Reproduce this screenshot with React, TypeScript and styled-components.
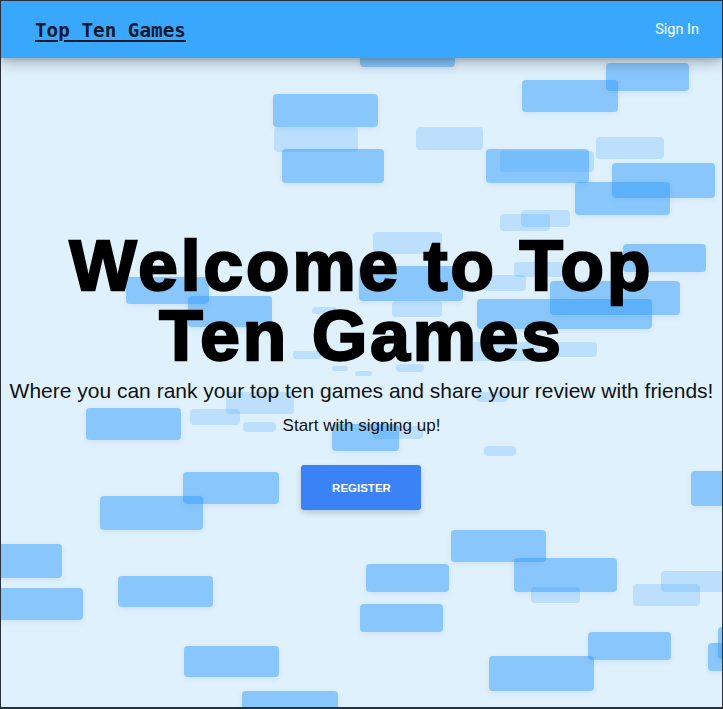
import React from "react";
import styled, { createGlobalStyle } from "styled-components";

const Global = createGlobalStyle`
  html, body { margin: 0; padding: 0; }
  body { background: #dff1fd; }
  * { box-sizing: border-box; }
`;

const Frame = styled.div`
  position: relative;
  width: 723px;
  height: 709px;
  border: 1px solid #28313a;
  border-bottom-width: 2px;
  background: #dff1fd;
  overflow: hidden;
  display: flex;
  flex-direction: column;
`;

const Header = styled.header`
  position: relative;
  z-index: 3;
  height: 57px;
  flex: none;
  display: flex;
  align-items: center;
  justify-content: space-between;
  padding: 0 23px 0 34px;
  background: #3aa7ff;
  box-shadow: 0 4px 14px rgba(0, 0, 0, 0.28), 0 2px 4px rgba(0, 0, 0, 0.12);
`;

const Brand = styled.a`
  font-family: "DejaVu Sans Mono", "Liberation Mono", monospace;
  font-weight: bold;
  font-size: 19.3px;
  color: #0d1b2a;
  text-decoration: underline;
  text-underline-offset: 3px;
  text-decoration-thickness: 2px;
  margin-top: 1px;
`;

const SignIn = styled.a`
  font-family: Roboto, "Liberation Sans", sans-serif;
  font-size: 14.5px;
  color: #ffffff;
`;

const Main = styled.main`
  position: relative;
  flex: 1;
  display: flex;
  flex-direction: column;
  align-items: center;
  padding-top: 173px;
`;

const Canvas = styled.div`
  position: absolute;
  inset: -58px 0 0 0;
  z-index: 0;
  pointer-events: none;
`;

const Block = styled.div<{ $light?: boolean }>`
  position: absolute;
  border-radius: 4px;
  background: ${(p) => (p.$light ? "rgba(58,160,255,0.22)" : "rgba(50,155,250,0.5)")};
  box-shadow: ${(p) => (p.$light ? "none" : "0 2px 6px rgba(20,60,110,0.08)")};
`;

const Content = styled.div`
  position: relative;
  z-index: 1;
  display: flex;
  flex-direction: column;
  align-items: center;
  text-align: center;
`;

const Title = styled.h1`
  margin: 0;
  font-family: "Liberation Sans", Arial, sans-serif;
  font-weight: 900;
  font-size: 71px;
  line-height: 70px;
  letter-spacing: 3px;
  -webkit-text-stroke: 2.5px #000;
  color: #000;
  width: 680px;
`;

const Subtitle = styled.p`
  margin: 8px 0 0;
  font-family: "Liberation Sans", Arial, sans-serif;
  font-size: 21px;
  color: #111;
  white-space: nowrap;
`;

const Prompt = styled.p`
  margin: 13px 0 0;
  font-family: "Liberation Sans", Arial, sans-serif;
  font-size: 17px;
  color: #111;
`;

const RegisterButton = styled.button`
  margin-top: 29px;
  width: 120px;
  height: 45px;
  border: none;
  border-radius: 3px;
  background: #3b82f6;
  color: #fff;
  font-family: "Liberation Sans", Arial, sans-serif;
  font-weight: bold;
  font-size: 11.5px;
  box-shadow: 0 3px 6px rgba(0, 0, 0, 0.18);
  cursor: pointer;
`;

type B = [number, number, number, number, boolean?];

const blocks: B[] = [
  [360, 40, 95, 28],
  [606, 64, 83, 28],
  [522, 81, 96, 32],
  [273, 95, 105, 33],
  [274, 128, 84, 25, true],
  [282, 150, 102, 34],
  [416, 128, 67, 23, true],
  [500, 152, 94, 21, true],
  [486, 150, 103, 34],
  [596, 138, 68, 22, true],
  [612, 164, 103, 35],
  [575, 183, 95, 33],
  [500, 215, 50, 17, true],
  [521, 211, 49, 17, true],
  [373, 233, 69, 22, true],
  [623, 245, 83, 28],
  [126, 278, 83, 27],
  [188, 297, 84, 31],
  [359, 267, 104, 35],
  [550, 282, 130, 34],
  [477, 300, 175, 30],
  [514, 263, 49, 15, true],
  [483, 276, 43, 16, true],
  [392, 302, 50, 16, true],
  [470, 343, 70, 19, true],
  [555, 343, 42, 15, true],
  [312, 308, 25, 7, true],
  [293, 352, 29, 8, true],
  [226, 393, 68, 22, true],
  [86, 409, 95, 32],
  [190, 410, 50, 16, true],
  [243, 423, 33, 10, true],
  [332, 425, 67, 27],
  [373, 427, 50, 13, true],
  [484, 447, 32, 10, true],
  [476, 393, 32, 10, true],
  [332, 367, 16, 5, true],
  [355, 372, 17, 5, true],
  [396, 365, 28, 8, true],
  [691, 472, 40, 35],
  [183, 473, 96, 32],
  [100, 497, 103, 34],
  [451, 531, 95, 32],
  [531, 588, 49, 16, true],
  [514, 559, 103, 34],
  [366, 565, 83, 28],
  [360, 605, 83, 28],
  [633, 585, 67, 22, true],
  [661, 572, 70, 21, true],
  [588, 633, 83, 28],
  [489, 657, 105, 35],
  [708, 644, 20, 28],
  [718, 628, 10, 32],
  [-20, 545, 82, 34],
  [-20, 589, 103, 32],
  [118, 577, 95, 31],
  [184, 647, 95, 31],
  [242, 692, 96, 30],
];

export default function App() {
  return (
    <>
      <Global />
      <Frame>
        <Header>
          <Brand>Top Ten Games</Brand>
          <SignIn>Sign In</SignIn>
        </Header>
        <Main>
          <Canvas>
            {blocks.map(([x, y, w, h, light], i) => (
              <Block
                key={i}
                $light={light}
                style={{ left: x - 1, top: y - 1, width: w, height: h }}
              />
            ))}
          </Canvas>
          <Content>
            <Title>Welcome to Top Ten Games</Title>
            <Subtitle>Where you can rank your top ten games and share your review with friends!</Subtitle>
            <Prompt>Start with signing up!</Prompt>
            <RegisterButton>REGISTER</RegisterButton>
          </Content>
        </Main>
      </Frame>
    </>
  );
}
